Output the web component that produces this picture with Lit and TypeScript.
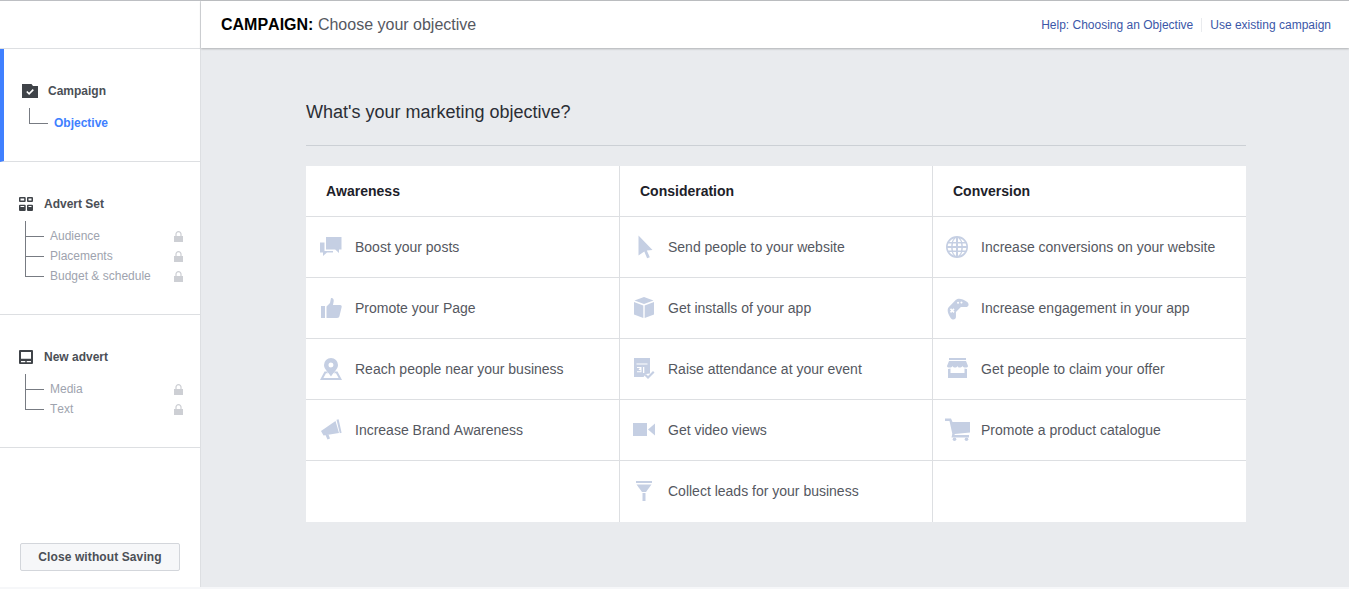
import { LitElement, html, css, svg } from "lit";
import { customElement } from "lit/decorators.js";

const c = "#c5cfe3";
const icons: Record<string, any> = {
  chat: svg`<path d="M6 1h15.500v12.500H19v3.500l-3.800-3.500H6z"/><path d="M0 6.500h4.500V15h8.500v1.500H7L3 20v-3.500H0z"/>`,
  thumb: svg`<rect x="1" y="9" width="4" height="12"/><path d="M6.500 9.500 10 6l1-5c2-.3 3 1.200 2.700 3.200L13 8h7c1.500 0 2 1 1.600 2.200L19.500 19c-.3 1.300-1 2-2.500 2H6.500z"/>`,
  pin: svg`<path fill-rule="evenodd" d="M11 0a7 7 0 0 1 7 7c0 4-4.500 7.500-7 11.500C8.500 14.500 4 11 4 7a7 7 0 0 1 7-7zm0 4.500a2.500 2.500 0 1 0 0 5 2.500 2.500 0 0 0 0-5z"/><path d="M4.500 13.500h2.300l1.200 1.800H6L3.400 20h15.200L16 15.300h-2l1.200-1.800h2.300L22 22H0z"/>`,
  horn: svg`<path d="M1 12 15.500 2l3.500 12-15.500 2.500z"/><path d="M16.500.8 18.600.3l3 13.400-1.800.6z"/><path d="M5.500 16l3-.5 1.500 4-2.500 1z"/>`,
  cursor: svg`<path d="M5.500-.5l14 14.500-5.700.4 3 6.800-2.700 1.100-2.800-6.800-5.800 4z"/>`,
  box: svg`<path d="M11 0l9.500 3.500L11 7 1.500 3.500z"/><path d="M1 5l9.300 3.400V21L1 17.500z"/><path d="M21 5l-9.300 3.400V21l9.300-3.500z"/>`,
  cal: svg`<path fill-rule="evenodd" d="M1 0h16v15.500l-4 .5-2.500 3H1zM3.500 5.500v1h11v-1zM4 9v1h3l-1.500 1.500.6.500H7.500v1.300H4v1h4.500V9zm6 0v6h1.300V9z"/><path d="M11.500 17.500l1.500-1.500 2 2 5-5 1.500 1.500L15 21z"/>`,
  video: svg`<rect x="0" y="4" width="14" height="13"/><path d="M15 10.500l7-6v12z"/>`,
  funnel: svg`<path d="M3 1h16v2H3z"/><path d="M3.500 4.500h15L13 12H9z"/><rect x="9.500" y="13" width="3" height="8"/>`,
  globe: svg`<path fill-rule="evenodd" d="M11 0a11 11 0 1 1 0 22 11 11 0 0 1 0-22zm-1 2c-1.300 1-2.300 2.200-3 4h3zm2 0v4h3c-.7-1.800-1.700-3-3-4zM8 2.500A9.500 9.500 0 0 0 3.200 6h2.600C6.300 4.600 7 3.500 8 2.500zm6 0c1 1 1.700 2.100 2.200 3.500h2.600A9.500 9.500 0 0 0 14 2.500zM2.400 7.500A9 9 0 0 0 1.700 10h3.500c0-.9.200-1.700.3-2.500zm4.600 0c-.2.800-.3 1.600-.3 2.500H10V7.500zm5 0V10h3.300c0-.9-.1-1.700-.3-2.500zm4.500 0c.1.800.3 1.600.3 2.500h3.500a9 9 0 0 0-.7-2.500zM1.700 12a9 9 0 0 0 .7 2.500h3.100c-.1-.8-.3-1.600-.3-2.500zm5 0c0 .9.100 1.700.3 2.500h3V12zm5.300 0v2.500h3c.2-.8.300-1.600.3-2.500zm4.800 0c0 .9-.2 1.700-.3 2.500h3.100a9 9 0 0 0 .7-2.500zM3.200 16a9.500 9.500 0 0 0 4.800 3.500c-1-1-1.700-2.100-2.200-3.500zM7 16c.7 1.800 1.700 3 3 4v-4zm5 0v4c1.300-1 2.300-2.200 3-4zm4.200 0c-.5 1.400-1.200 2.500-2.200 3.500a9.500 9.500 0 0 0 4.800-3.500z"/>`,
  game: svg`<g transform="rotate(-45 11 11)"><path fill-rule="evenodd" d="M6 4.500h10c3.200 0 5.500 4 6.500 9 .6 3.500-2.500 5-4.500 3l-3.500-3.500h-7L4 16.500c-2 2-5.100.5-4.500-3 1-5 3.300-9 6.500-9zM5 7v1.700H3.300v1.600H5V12h1.600v-1.700h1.700V8.700H6.600V7zm10.500 0a1 1 0 1 0 0 2 1 1 0 0 0 0-2zm2.500 2.300a1 1 0 1 0 0 2 1 1 0 0 0 0-2z"/></g>`,
  store: svg`<path d="M3 0h17v2H3z"/><path d="M3 3h17l2 5c0 1-1 1.500-2.500 1.500S17 9 16.500 8c-.5 1-2 1.500-3 1.500S12 9 11.500 8c-.5 1-1.500 1.500-2.500 1.500S7 9 6.500 8C6 9 5 9.500 3.500 9.500S1 9 1 8z"/><path d="M2 11c1 0 2-.2 2.500-.5V15h14v-4.500c.5.300 1.500.5 2.500.5v9H2z"/>`,
  cart: svg`<path d="M-1-.5h6L6.500 3H24v10.500L8.800 15l-.3 1H23v2.500H5.500l.8-3.800L3.500 2H-1z"/><circle cx="8.500" cy="20.300" r="1.800"/><circle cx="20.500" cy="20.300" r="1.800"/>`,
};

const columns = [
  { title: "Awareness", rows: [["chat", "Boost your posts"], ["thumb", "Promote your Page"], ["pin", "Reach people near your business"], ["horn", "Increase Brand Awareness"]] },
  { title: "Consideration", rows: [["cursor", "Send people to your website"], ["box", "Get installs of your app"], ["cal", "Raise attendance at your event"], ["video", "Get video views"], ["funnel", "Collect leads for your business"]] },
  { title: "Conversion", rows: [["globe", "Increase conversions on your website"], ["game", "Increase engagement in your app"], ["store", "Get people to claim your offer"], ["cart", "Promote a product catalogue"]] },
];

const lock = html`<svg class="lock" viewBox="0 0 9 11" fill="#cdcfd4"><path d="M0 5h9v6H0z"/><path fill="none" stroke="#cdcfd4" stroke-width="1.200" d="M2 5V3a2.500 2.300 0 0 1 5 0v2"/></svg>`;

@customElement("app-root")
export class AppRoot extends LitElement {
  static styles = css`
    :host { display: block; font-family: "Liberation Sans", Arial, sans-serif; height: 589px; overflow: hidden; background: #f6f7f9; font-kerning: none; }
    .page { display: flex; height: 587px; border-top: 1px solid #bdbfc3; box-sizing: border-box; }
    .side { width: 201px; flex: none; box-sizing: border-box; background: #fff; border-right: 1px solid #dddfe2; display: flex; flex-direction: column; }
    .side-top { height: 47px; flex: none; border-bottom: 1px solid #dddfe2; box-sizing: content-box; }
    .sec { border-bottom: 1px solid #dddfe2; box-sizing: border-box; padding-left: 18px; padding-right: 17px; }
    .sec.camp { height: 113px; border-left: 4px solid #4080ff; padding-top: 34px; padding-left: 18px; }
    .sec.adv { height: 153px; padding-top: 34px; }
    .sec.new { height: 133px; padding-top: 34px; }
    .head { display: flex; align-items: center; height: 16px; font-size: 12px; font-weight: 700; color: #4b4f56; }
    .head svg { width: 16px; height: 16px; flex: none; margin-right: 10px; }
    .tree { position: relative; margin: 14px 0 0 7px; }
    .row { display: flex; align-items: center; height: 20px; font-size: 12px; color: #9ea3ae; position: relative; padding-left: 25px; }
    .row::before { content: ""; position: absolute; left: 0; top: 10px; width: 19px; border-top: 1px solid #777b82; }
    .row::after { content: ""; position: absolute; left: 0; top: -5px; height: 15px; border-left: 1px solid #777b82; }
    .row + .row::after { top: -10px; height: 20px; }
    .row span { flex: 1; }
    .lock { width: 9px; height: 11px; flex: none; }
    .obj { margin: 16px 0 0 8px; display: block; position: relative; height: 16px; line-height: 16px; font-size: 12px; font-weight: 700; color: #4080ff; padding-left: 24px; }
    .obj::before { content: ""; position: absolute; left: -1px; top: -7px; width: 18px; height: 15px; border-left: 1px solid #777b82; border-bottom: 1px solid #777b82; }
    .spacer { flex: 1; }
    .foot { padding: 0 20px 16px; }
    .btn { display: block; width: 100%; height: 28px; box-sizing: border-box; border: 1px solid #d3d6db; border-radius: 2px; background: #f6f7f9; color: #4b4f56; font: 700 12px "Liberation Sans", Arial, sans-serif; font-kerning: none; letter-spacing: .1px; padding: 0; }
    .main { flex: 1; min-width: 0; background: #e9ebee; display: flex; flex-direction: column; }
    .bar { height: 47px; flex: none; background: #fff; box-shadow: 0 1px 2px rgba(0,0,0,.25); display: flex; align-items: center; justify-content: space-between; padding: 0 18px 0 20px; position: relative; }
    .crumb { font-size: 16px; color: #55585f; }
    .crumb b { color: #000; }
    .links { display: flex; align-items: center; font-size: 12px; color: #3b57a8; }
    .links span + span { border-left: 1px solid #e9ebee; margin-left: 8px; padding-left: 8px; }
    .content { padding: 0 103px 0 105px; }
    h1 { margin: 0; padding-top: 54px; height: 43px; font-size: 18px; line-height: 21px; font-weight: 400; color: #2b2e35; border-bottom: 1px solid #ccd0d5; box-sizing: content-box; }
    .grid { margin-top: 20px; display: grid; grid-template-columns: 314px 313px 313px; background: #fff; }
    .col { border-right: 1px solid #dddfe2; box-sizing: border-box; height: 356px; }
    .col:last-child { border-right: 0; }
    .th { height: 51px; box-sizing: border-box; border-bottom: 1px solid #dddfe2; font-size: 14px; font-weight: 700; color: #1d2129; display: flex; align-items: center; padding-left: 20px; }
    .td { height: 61px; box-sizing: border-box; border-bottom: 1px solid #dddfe2; display: flex; align-items: center; font-size: 14px; color: #55585f; }
    .td:last-child { border-bottom-color: transparent; }
    .c1 .td { padding-left: 14px; }
    .c2 .td, .c3 .td { padding-left: 13px; }
    .td svg { width: 22px; height: 22px; flex: none; margin-right: 13px; overflow: visible; }
  `;

  render() {
    return html`
      <div class="page">
        <aside class="side">
          <div class="side-top"></div>
          <section class="sec camp">
            <div class="head">
              <svg viewBox="0 0 16 16" fill="#3f4348"><path d="M0 1h9.500l1.500 2h5v12H0z"/><path d="M4.800 8.500l2.300 2.300 4.200-4.200" fill="none" stroke="#fff" stroke-width="1.600"/></svg>
              Campaign
            </div>
            <span class="obj">Objective</span>
          </section>
          <section class="sec adv">
            <div class="head">
              <svg viewBox="0 0 16 16" fill="#3f4348"><path fill-rule="evenodd" d="M2 1h4.700a1 1 0 0 1 1 1v3a1 1 0 0 1-1 1H2a1 1 0 0 1-1-1V2a1 1 0 0 1 1-1zm.5 1.400v2.200h3.700V2.400zM10 1h4a1 1 0 0 1 1 1v3a1 1 0 0 1-1 1h-4a1 1 0 0 1-1-1V2a1 1 0 0 1 1-1zm.5 1.400v2.200h3V2.400zM2 8.800h4.700a1 1 0 0 1 1 1V14a1 1 0 0 1-1 1H2a1 1 0 0 1-1-1V9.800a1 1 0 0 1 1-1zm.5 1.300v.8h3.700v-.8zM10 8.800h4a1 1 0 0 1 1 1V14a1 1 0 0 1-1 1h-4a1 1 0 0 1-1-1V9.800a1 1 0 0 1 1-1zm.5 1.300v.8h3v-.8z"/></svg>
              Advert Set
            </div>
            <div class="tree">
              <div class="row"><span>Audience</span>${lock}</div>
              <div class="row"><span>Placements</span>${lock}</div>
              <div class="row"><span>Budget &amp; schedule</span>${lock}</div>
            </div>
          </section>
          <section class="sec new">
            <div class="head">
              <svg viewBox="0 0 16 16" fill="#3f4348"><path fill-rule="evenodd" d="M2 1h12a1 1 0 0 1 1 1v12a1 1 0 0 1-1 1H2a1 1 0 0 1-1-1V2a1 1 0 0 1 1-1zm1 2v6.800h10V3zm0 9v1.300h4.300V12zm5.700 0v1.300H13V12z"/></svg>
              New advert
            </div>
            <div class="tree">
              <div class="row"><span>Media</span>${lock}</div>
              <div class="row"><span>Text</span>${lock}</div>
            </div>
          </section>
          <div class="spacer"></div>
          <div class="foot"><button class="btn">Close without Saving</button></div>
        </aside>
        <main class="main">
          <header class="bar">
            <div class="crumb"><b>CAMPAIGN:</b> Choose your objective</div>
            <div class="links"><span>Help: Choosing an Objective</span><span>Use existing campaign</span></div>
          </header>
          <div class="content">
            <h1>What's your marketing objective?</h1>
            <div class="grid">
              ${columns.map((col, i) => html`
                <div class="col c${i + 1}">
                  <div class="th">${col.title}</div>
                  ${col.rows.map(([ic, t]) => html`
                    <div class="td">
                      <svg viewBox="0 0 22 22" fill=${c}>${icons[ic]}</svg>
                      <span>${t}</span>
                    </div>`)}
                  ${col.rows.length < 5 ? html`<div class="td"></div>` : ""}
                </div>`)}
            </div>
          </div>
        </main>
      </div>
    `;
  }
}
